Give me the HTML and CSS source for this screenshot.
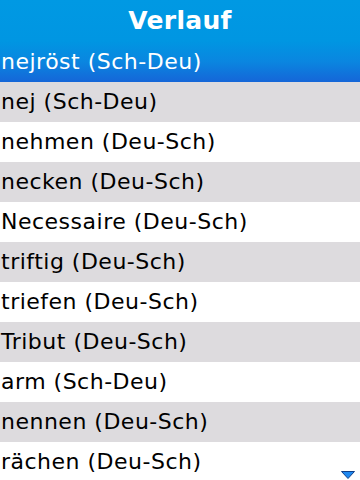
FILE: index.html
```html
<!DOCTYPE html>
<html lang="de">
<head>
    <meta charset="UTF-8">
    <meta name="viewport" content="width=device-width, initial-scale=1.0">
    <title>Verlauf</title>
    <link rel="stylesheet" href="styles.css">
</head>
<body>
    <div class="screen">
        <div class="title">Verlauf</div>
        <ul class="history">
            <li class="item selected">nejröst (Sch-Deu)</li>
            <li class="item alt">nej (Sch-Deu)</li>
            <li class="item">nehmen (Deu-Sch)</li>
            <li class="item alt">necken (Deu-Sch)</li>
            <li class="item">Necessaire (Deu-Sch)</li>
            <li class="item alt">triftig (Deu-Sch)</li>
            <li class="item">triefen (Deu-Sch)</li>
            <li class="item alt">Tribut (Deu-Sch)</li>
            <li class="item">arm (Sch-Deu)</li>
            <li class="item alt">nennen (Deu-Sch)</li>
            <li class="item">rächen (Deu-Sch)</li>
        </ul>
        <svg class="more" width="14" height="8" viewBox="0 0 14 8">
            <polygon points="0.5,0.5 13.5,0.5 7,7.5" fill="#1e88f0" stroke="#10408a" stroke-width="1"/>
        </svg>
    </div>
</body>
</html>
```

FILE: styles.css
```css
body {
    margin: 0;
    font-family: "DejaVu Sans", sans-serif;
    background-color: #fff;
}
.screen {
    position: relative;
    width: 360px;
    height: 480px;
    overflow: hidden;
}
.title {
    height: 41px;
    line-height: 41px;
    text-align: center;
    color: #fff;
    font-weight: bold;
    font-size: 25px;
    letter-spacing: 0.3px;
    background: linear-gradient(#0099e3, #0096e2);
}
.history {
    list-style: none;
    margin: 0;
    padding: 0;
}
.item {
    height: 40px;
    line-height: 40px;
    padding-left: 1px;
    font-size: 22px;
    letter-spacing: 0.5px;
    color: #000;
    white-space: nowrap;
}
.item.alt {
    background-color: #dddbde;
}
.item.selected {
    height: 41px;
    line-height: 41px;
    color: #fff;
    background: linear-gradient(#0096e2, #0a86e0 50%, #1566d8);
}
.more {
    position: absolute;
    right: 5px;
    bottom: 1px;
}
```
